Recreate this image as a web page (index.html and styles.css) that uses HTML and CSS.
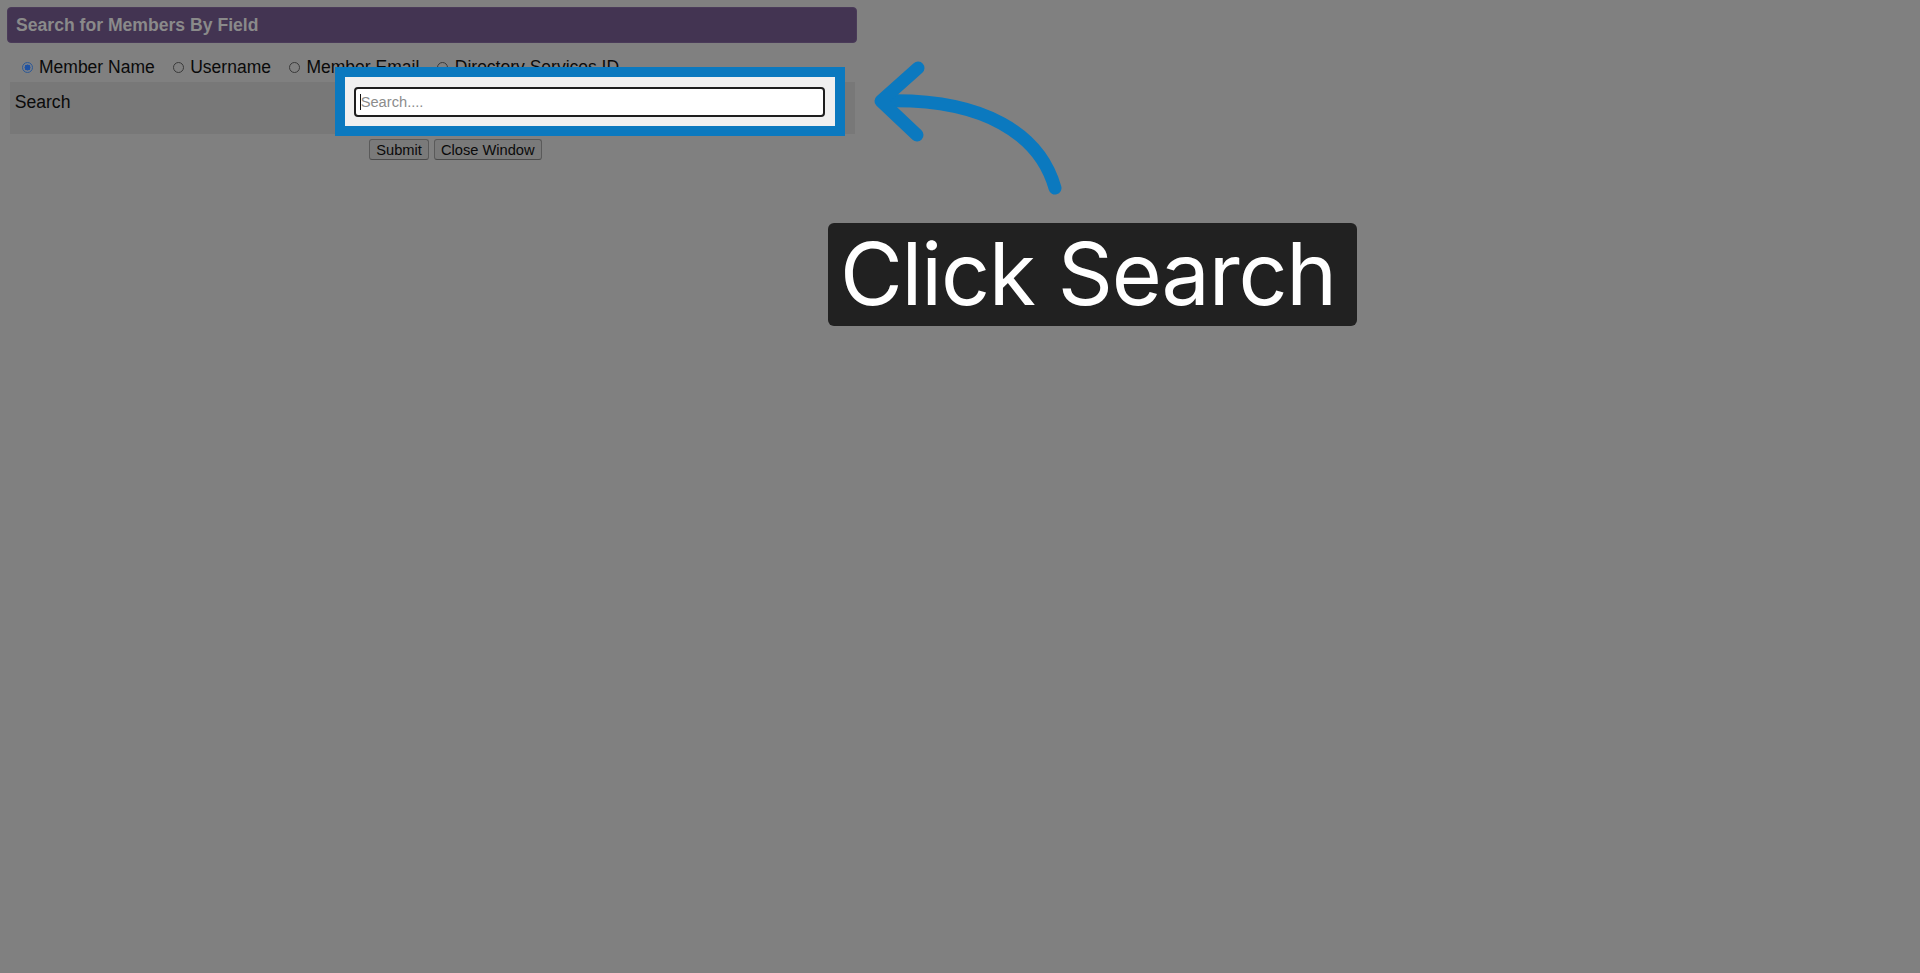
FILE: index.html
```html
<!DOCTYPE html>
<html lang="en">
<head>
<meta charset="utf-8">
<title>Search for Members By Field</title>
<link rel="stylesheet" href="styles.css">
</head>
<body>
<div class="page">
  <div class="header">Search for Members By Field</div>

  <div class="radios">
    <label class="opt"><span class="radio checked"></span><span class="lbl">Member Name</span></label>
    <label class="opt"><span class="radio"></span><span class="lbl">Username</span></label>
    <label class="opt"><span class="radio"></span><span class="lbl">Member Email</span></label>
    <label class="opt"><span class="radio"></span><span class="lbl">Directory Services ID</span></label>
  </div>

  <div class="band">
    <div class="band-label">Search</div>
    <div class="band-field">
      <div class="spotlight"></div>
      <div class="input-wrap">
        <input class="search-input" type="text" placeholder="Search....">
        <span class="caret"></span>
      </div>
    </div>
  </div>

  <div class="buttons">
    <button class="btn" type="button">Submit</button>
    <button class="btn" type="button">Close Window</button>
  </div>
</div>

<svg class="arrow" width="220" height="160" viewBox="860 50 220 160" xmlns="http://www.w3.org/2000/svg">
  <g fill="none" stroke="#0b79bf" stroke-width="13" stroke-linecap="round" stroke-linejoin="round">
    <path d="M1055 188 C1040 135 985 98 884 101"/>
    <path d="M918 68 L881 101 L917 135"/>
  </g>
</svg>

<div class="callout">Click Search</div>
</body>
</html>
```

FILE: styles.css
```css
html, body {
  margin: 0;
  padding: 0;
}

body {
  background: #808080;
  width: 1920px;
  height: 973px;
  overflow: hidden;
  position: relative;
  font-family: "Liberation Sans", Arial, sans-serif;
  color: #0a0a0a;
}

.page {
  padding: 7px 0 0 7px;
}

.header {
  width: 850px;
  height: 36px;
  box-sizing: border-box;
  background: #433452;
  border: 1px solid #4a3b59;
  border-radius: 4px;
  padding-left: 8px;
  line-height: 34px;
  font-size: 17.6px;
  font-weight: bold;
  color: #8a8a8a;
}

.radios {
  display: flex;
  align-items: center;
  height: 20px;
  margin-top: 14px;
  padding-left: 14.5px;
  gap: 18px;
  font-size: 17.5px;
  line-height: 20px;
}

.opt {
  display: flex;
  align-items: center;
  gap: 6.5px;
}

.radio {
  width: 11px;
  height: 11px;
  box-sizing: border-box;
  border-radius: 50%;
  border: 1px solid #3a3a3a;
  margin-top: 0;
}

.radio.checked {
  border-color: #2f5a94;
  background: radial-gradient(circle, #1f52a3 0 2.8px, #7a7f88 3.2px 100%);
}

.band {
  display: flex;
  align-items: flex-start;
  width: 845px;
  height: 52px;
  margin: 5px 0 0 3px;
  background: #787878;
  font-size: 17.6px;
  line-height: 20px;
}

.band-label {
  width: 339px;
  padding: 10px 0 0 4.7px;
}

.band-field {
  position: relative;
  padding-top: 4.7px;
}

.spotlight {
  position: absolute;
  left: -19px;
  top: -14.8px;
  width: 490px;
  height: 48.5px;
  background: #f0f0f0;
  border: 10px solid #0b79bf;
}

.input-wrap {
  position: relative;
}

.search-input {
  display: block;
  width: 471px;
  height: 30px;
  box-sizing: border-box;
  border: 2px solid #1e1e1e;
  border-radius: 4px;
  background: #ffffff;
  outline: none;
  padding: 0 5px;
  font-family: "Liberation Sans", Arial, sans-serif;
  font-size: 14.67px;
  color: #000;
}

.search-input::placeholder {
  color: #8c8c8c;
}

.caret {
  position: absolute;
  left: 6.5px;
  top: 7px;
  width: 1px;
  height: 16px;
  background: #111;
}

.buttons {
  display: flex;
  gap: 5px;
  margin: 5px 0 0 362.3px;
}

.btn {
  height: 21px;
  box-sizing: border-box;
  padding: 0 6px;
  margin: 0;
  background: #7a7a7a;
  border: 1px solid #5a5a5a;
  border-bottom-color: #4a4a4a;
  border-radius: 3px;
  font-family: "Liberation Sans", Arial, sans-serif;
  font-size: 14.67px;
  line-height: 18px;
  color: #0a0a0a;
}

.arrow {
  position: absolute;
  left: 860px;
  top: 50px;
}

.callout {
  position: absolute;
  left: 828px;
  top: 223px;
  width: 529px;
  height: 103px;
  box-sizing: border-box;
  padding-left: 12px;
  background: #212121;
  border-radius: 6px;
  font-family: Inter, "Noto Sans", sans-serif;
  font-size: 86px;
  letter-spacing: -1.2px;
  line-height: 103px;
  color: #ffffff;
  white-space: nowrap;
}
```
